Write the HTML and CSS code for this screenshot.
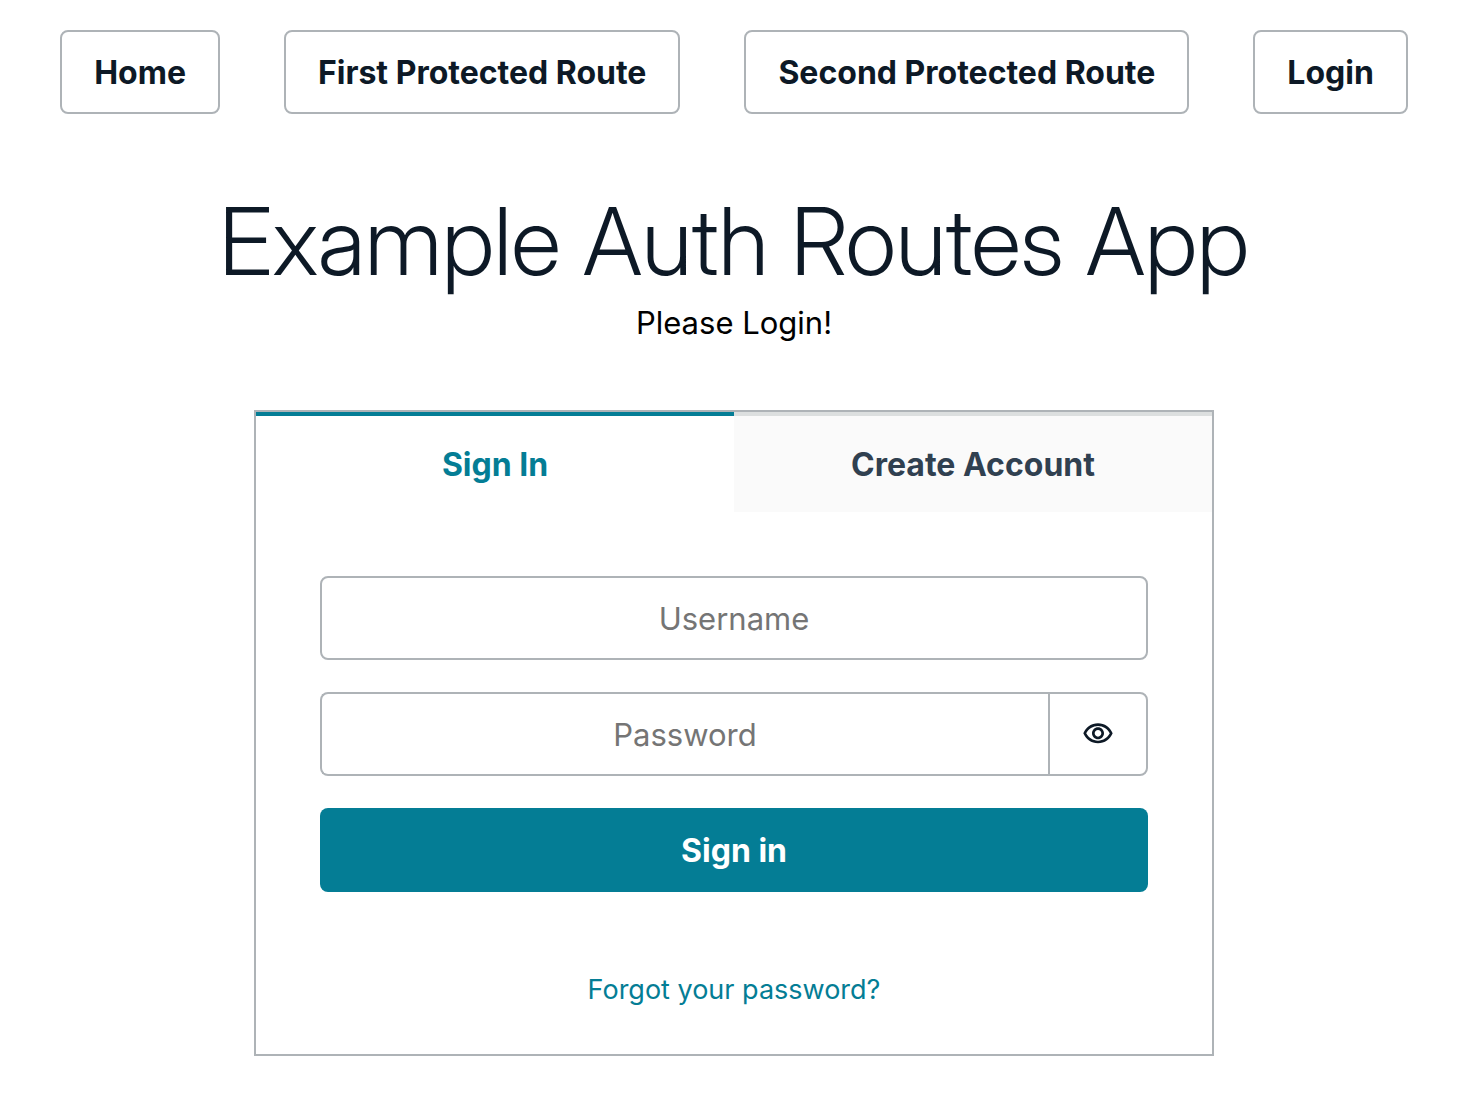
FILE: index.html
```html
<!DOCTYPE html>
<html lang="en">
<head>
<meta charset="utf-8">
<title>Example Auth Routes App</title>
<link rel="stylesheet" href="styles.css">
</head>
<body>
<nav class="nav">
  <button class="button" type="button">Home</button>
  <button class="button" type="button">First Protected Route</button>
  <button class="button" type="button">Second Protected Route</button>
  <button class="button" type="button">Login</button>
</nav>
<main class="main">
  <h1 class="title">Example Auth Routes App</h1>
  <p class="message">Please Login!</p>
  <section class="card">
    <div class="tabs" role="tablist">
      <button class="tab tab-active" type="button" role="tab" aria-selected="true">Sign In</button>
      <button class="tab" type="button" role="tab" aria-selected="false">Create Account</button>
    </div>
    <form class="form">
      <input class="input" type="text" placeholder="Username" aria-label="Username">
      <div class="password">
        <input class="input" type="password" placeholder="Password" aria-label="Password">
        <button class="reveal" type="button" aria-label="Show password">
          <svg class="eye" viewBox="0 0 24 24" aria-hidden="true"><path fill="currentColor" d="M12 6c3.79 0 7.17 2.13 8.82 5.5C19.17 14.87 15.79 17 12 17s-7.17-2.13-8.82-5.5C4.83 8.13 8.21 6 12 6m0-2C7 4 2.73 7.11 1 11.5 2.73 15.89 7 19 12 19s9.27-3.11 11-7.5C21.27 7.11 17 4 12 4zm0 5c1.38 0 2.5 1.12 2.5 2.5S13.38 14 12 14s-2.5-1.12-2.5-2.5S10.62 9 12 9m0-2c-2.48 0-4.5 2.02-4.5 4.5S9.52 16 12 16s4.5-2.02 4.5-4.5S14.48 7 12 7z"/></svg>
        </button>
      </div>
      <button class="submit" type="submit">Sign in</button>
    </form>
    <footer class="footer"><a class="link" href="#">Forgot your password?</a></footer>
  </section>
</main>
</body>
</html>
```

FILE: styles.css
```css
* {
  box-sizing: border-box;
}

body {
  margin: 0;
  background: #fff;
  color: #000;
  font-family: Inter, "Liberation Sans", sans-serif;
  font-size: 31px;
  line-height: 48px;
  text-align: center;
}

button,
input {
  margin: 0;
  font: inherit;
}

.nav {
  display: flex;
  justify-content: center;
  gap: 64px;
  padding: 30px 32px 0 42px;
}

.button {
  padding: 17px 32px 15px;
  border: 2px solid #aeb3b7;
  border-radius: 8px;
  background: #fff;
  color: #0d1926;
  font-size: 32px;
  font-weight: 700;
}

.main {
  display: flex;
  flex-direction: column;
  align-items: center;
  padding: 69px 32px 40px 42px;
}

.title {
  margin: 0;
  color: #0d1926;
  font-family: "Inter Display", Inter, sans-serif;
  font-size: 93px;
  font-variation-settings: "opsz" 32;
  font-weight: 300;
  line-height: 116px;
}

.message {
  margin: 0;
}

.card {
  width: 100%;
  max-width: 960px;
  margin-top: 63px;
  border: 2px solid #aeb3b7;
}

.tabs {
  display: flex;
}

.tab {
  flex: 1;
  padding: 25px 32px 23px;
  border: 0;
  border-top: 4px solid #dcdfdf;
  background: #fafafa;
  color: #304050;
  font-size: 32px;
  font-weight: 700;
}

.tab-active {
  border-color: #047d95;
  background: #fff;
  color: #047d95;
}

.form {
  display: flex;
  flex-direction: column;
  gap: 32px;
  padding: 64px;
}

.input {
  width: 100%;
  height: 84px;
  padding: 16px 32px;
  border: 2px solid #aeb3b7;
  border-radius: 8px;
  background: #fff;
  color: #0d1926;
  text-align: center;
}

.input::placeholder {
  color: #757575;
  opacity: 1;
}

.password {
  display: flex;
}

.password .input {
  flex: 1;
  min-width: 0;
  border-right: 0;
  border-radius: 8px 0 0 8px;
}

.reveal {
  display: flex;
  align-items: center;
  justify-content: center;
  width: 100px;
  border: 2px solid #aeb3b7;
  border-radius: 0 8px 8px 0;
  background: #fff;
  color: #0d1926;
}

.eye {
  width: 32px;
  height: 32px;
}

.submit {
  padding: 19px 32px 17px;
  border: 0;
  border-radius: 8px;
  background: #047d95;
  color: #fff;
  font-size: 32px;
  font-weight: 700;
}

.footer {
  padding: 10px 0 40px;
  font-size: 27px;
}

.link {
  color: #047d95;
  text-decoration: none;
}
```
